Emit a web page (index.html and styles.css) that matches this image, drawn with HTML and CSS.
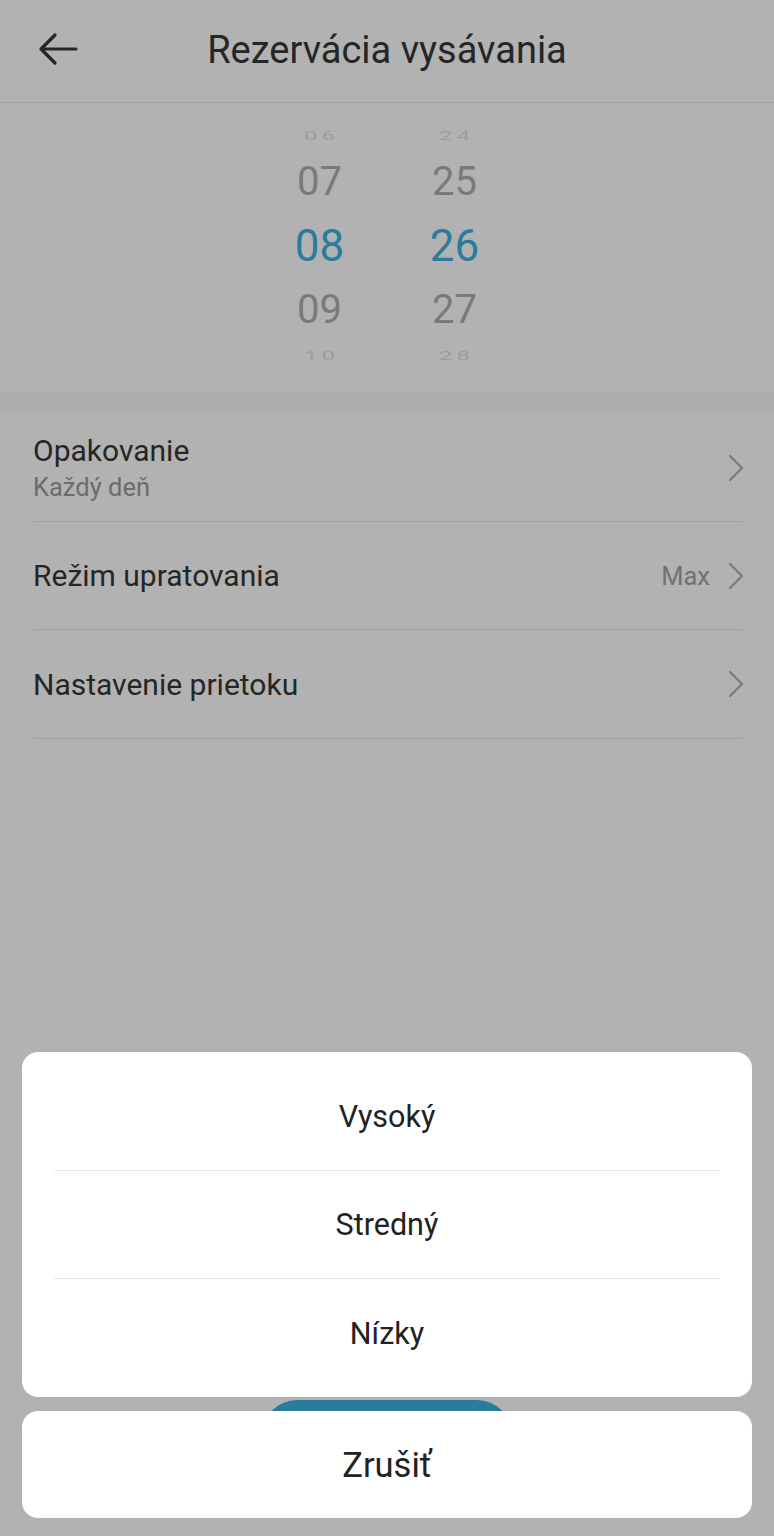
FILE: index.html
```html
<!DOCTYPE html>
<html lang="sk">
<head>
<meta charset="utf-8">
<title>Rezervácia vysávania</title>
<link rel="stylesheet" href="styles.css">
</head>
<body>
<div class="screen">
  <header class="topbar">
    <svg class="back" width="44" height="36" viewBox="0 0 44 36">
      <path d="M40 18H5M19 4L5 18l14 14" fill="none" stroke="#262626" stroke-width="3.2" stroke-linecap="round" stroke-linejoin="round"/>
    </svg>
    <h1 class="title">Rezervácia vysávania</h1>
  </header>

  <section class="picker">
    <div class="col">
      <div class="cell far">06</div>
      <div class="cell near">07</div>
      <div class="cell sel">08</div>
      <div class="cell near near-b">09</div>
      <div class="cell far">10</div>
    </div>
    <div class="col">
      <div class="cell far">24</div>
      <div class="cell near">25</div>
      <div class="cell sel">26</div>
      <div class="cell near near-b">27</div>
      <div class="cell far">28</div>
    </div>
  </section>
  <div class="band"></div>

  <ul class="list">
    <li class="row row-tall">
      <div class="texts">
        <span class="label">Opakovanie</span>
        <span class="sub">Každý deň</span>
      </div>
      <svg class="chev" width="16" height="28" viewBox="0 0 16 28"><path d="M2 2l12 12L2 26" fill="none" stroke="#7c7c7c" stroke-width="2.4" stroke-linecap="round" stroke-linejoin="round"/></svg>
    </li>
    <li class="row">
      <span class="label">Režim upratovania</span>
      <span class="value">Max</span>
      <svg class="chev" width="16" height="28" viewBox="0 0 16 28"><path d="M2 2l12 12L2 26" fill="none" stroke="#7c7c7c" stroke-width="2.4" stroke-linecap="round" stroke-linejoin="round"/></svg>
    </li>
    <li class="row row-last">
      <span class="label">Nastavenie prietoku</span>
      <svg class="chev" width="16" height="28" viewBox="0 0 16 28"><path d="M2 2l12 12L2 26" fill="none" stroke="#7c7c7c" stroke-width="2.4" stroke-linecap="round" stroke-linejoin="round"/></svg>
    </li>
  </ul>

  <div class="save-btn"></div>

  <div class="sheet">
    <div class="card options">
      <div class="opt">Vysoký</div>
      <div class="opt">Stredný</div>
      <div class="opt">Nízky</div>
    </div>
    <div class="card cancel">Zrušiť</div>
  </div>
</div>
</body>
</html>
```

FILE: styles.css
```css
* { box-sizing: border-box; }
html, body { margin: 0; padding: 0; }
body {
  background: #b2b2b2;
  font-family: Roboto, "Noto Sans", "Liberation Sans", sans-serif;
  color: #262626;
}
.screen {
  position: relative;
  width: 774px;
  height: 1536px;
  overflow: hidden;
  background: #b2b2b2;
}
.topbar {
  height: 103px;
  display: flex;
  align-items: center;
  border-bottom: 1px solid #a2a2a2;
  position: relative;
  padding-left: 36px;
}
.back { display: block; margin-top: -4px; }
.title {
  position: absolute;
  left: 0; right: 0; top: 0;
  margin: 0;
  text-align: center;
  font-weight: 400;
  font-size: 38px;
  line-height: 100px;
  color: #262626;
  pointer-events: none;
}
.picker {
  height: 289px;
  display: flex;
  justify-content: center;
  gap: 65px;
  padding-top: 15px;
}
.col {
  width: 70px;
  display: flex;
  flex-direction: column;
  align-items: center;
}
.cell {
  text-align: center;
  width: 100%;
}
.far {
  height: 36px;
  line-height: 36px;
  font-size: 24px;
  letter-spacing: 4px;
  padding-left: 4px;
  color: #9d9d9d;
  transform: scaleY(0.55);
}
.near {
  height: 56px;
  line-height: 56px;
  font-size: 40px;
  color: #7a7a7a;
}
.sel {
  height: 72px;
  line-height: 72px;
  font-size: 44px;
  color: #2a7c9f;
}
.band {
  height: 20px;
  background: #acacac;
}
.list {
  list-style: none;
  margin: 0;
  padding: 0 32px 0 33px;
}
.row {
  height: 108px;
  display: flex;
  align-items: center;
  border-bottom: 1px solid #a1a1a1;
}
.row-tall { height: 110px; padding-top: 2px; }
.row-last { height: 109px; }
.texts {
  display: flex;
  flex-direction: column;
  gap: 4px;
  flex: 1;
}
.label {
  font-size: 30px;
  color: #262626;
  flex: 1;
}
.texts .label { flex: none; }
.sub {
  font-size: 25.5px;
  color: #6c6c6c;
}
.value {
  font-size: 25.5px;
  color: #717171;
  margin-right: 18px;
}
.chev { display: block; flex: none; margin-right: -2px; }
.save-btn {
  position: absolute;
  left: 262px;
  top: 1400px;
  width: 250px;
  height: 70px;
  border-radius: 35px;
  background: #2a7c9c;
}
.sheet {
  position: absolute;
  left: 22px;
  right: 22px;
  top: 1052px;
  display: flex;
  flex-direction: column;
  gap: 14px;
}
.card {
  background: #ffffff;
  border-radius: 16px;
}
.options {
  padding: 11px 32px 10px;
}
.opt {
  height: 108px;
  display: flex;
  align-items: center;
  justify-content: center;
  font-size: 30.5px;
  color: #222222;
  border-bottom: 1px solid #e8e8e8;
}
.opt:last-child { border-bottom: none; }
.cancel {
  height: 107px;
  display: flex;
  align-items: center;
  justify-content: center;
  font-size: 34.5px;
  color: #222222;
}
```
